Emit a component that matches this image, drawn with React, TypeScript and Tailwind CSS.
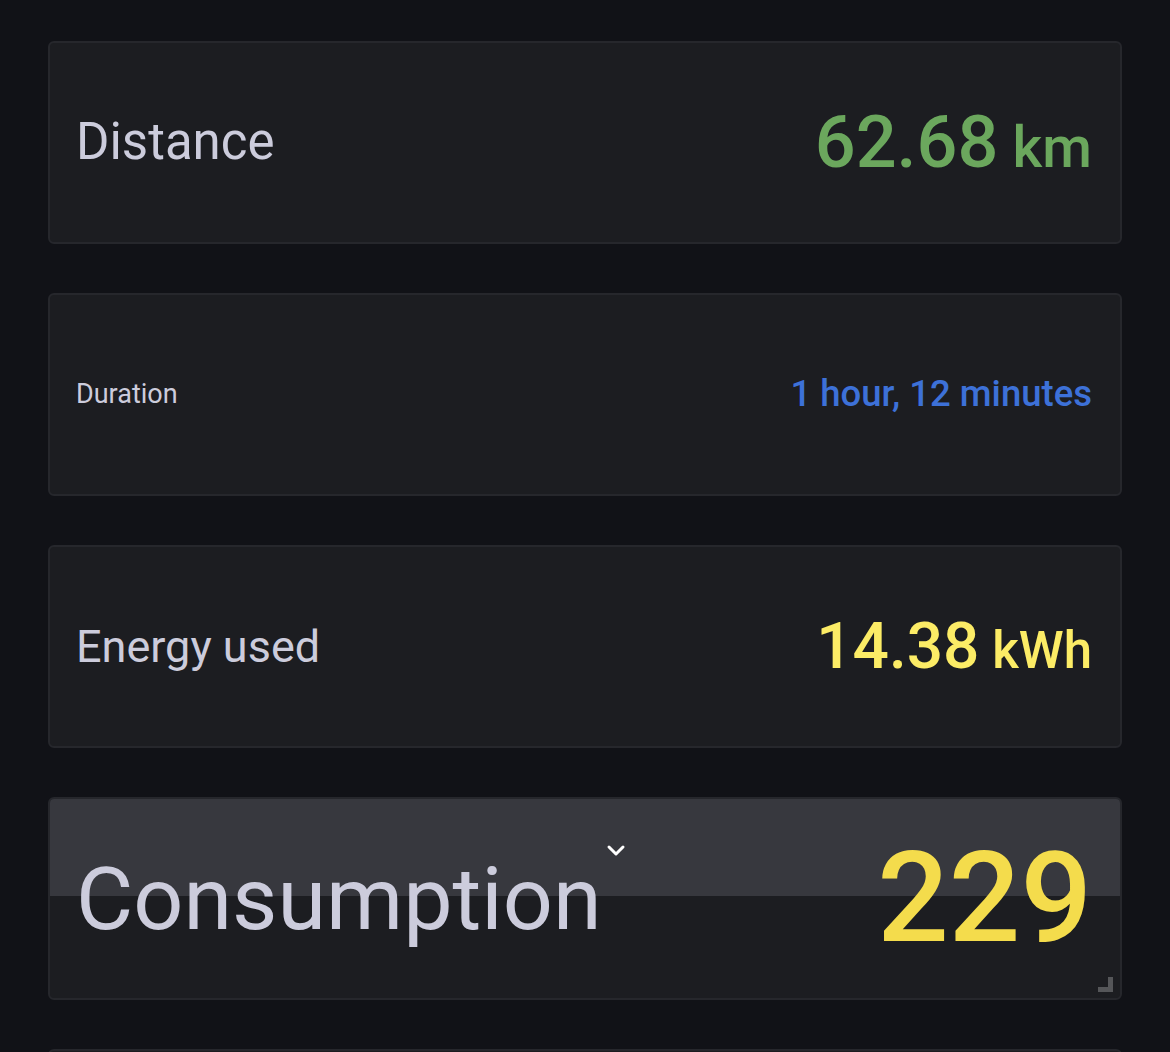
import React from 'react'

const font = { fontFamily: 'Roboto, "Open Sans", sans-serif' }

type StatProps = {
  label: string
  labelClass: string
  value: string
  unit?: string
  valueClass: string
  unitClass?: string
  color: string
  hover?: boolean
}

const Stat = ({ label, labelClass, value, unit, valueClass, unitClass, color, hover }: StatProps) => {
  return (
    <div className="relative h-[203px] rounded-md border-2 border-[#26272c] bg-[#1c1d21] overflow-hidden">
      {hover && (
        <div className="absolute left-0 right-0 top-0 h-[97px] bg-[#37383e]">
          <svg className="absolute left-[555px] top-[44px]" width="22" height="14" viewBox="0 0 22 14">
            <path d="M4 4 L11 11 L18 4" fill="none" stroke="#ffffff" strokeWidth="3" strokeLinecap="round" strokeLinejoin="round" />
          </svg>
        </div>
      )}
      <div className="relative flex h-full items-center justify-between pl-[26px] pr-[28px]">
        <span className={`text-[#ccccdc] ${labelClass}`}>{label}</span>
        <span className={`whitespace-nowrap ${valueClass} ${color}`}>
          {value}
          {unit && <span className={unitClass}>{unit}</span>}
        </span>
      </div>
      {hover && (
        <div className="absolute right-[7px] bottom-[6px] h-[15px] w-[15px]">
          <div className="absolute right-0 bottom-0 h-[15px] w-[5px] bg-[#555659]" />
          <div className="absolute right-0 bottom-0 h-[5px] w-[15px] bg-[#555659]" />
        </div>
      )}
    </div>
  )
}

export default function App() {
  return (
    <div className="min-h-screen h-[1052px] overflow-hidden bg-[#111217] px-[48px] pt-[41px]" style={font}>
      <div className="flex flex-col gap-[49px]">
        <Stat
          label="Distance"
          labelClass="text-[51px]"
          value="62.68"
          unit=" km"
          valueClass="text-[72px] font-medium"
          unitClass="text-[57px]"
          color="text-[#6ba75d]"
        />
        <Stat
          label="Duration"
          labelClass="text-[27px]"
          value="1 hour, 12 minutes"
          valueClass="text-[36.5px] font-medium"
          color="text-[#3d71d8]"
        />
        <Stat
          label="Energy used"
          labelClass="text-[45px]"
          value="14.38"
          unit=" kWh"
          valueClass="text-[64px] font-medium"
          unitClass="text-[51px]"
          color="text-[#fcec66]"
        />
        <Stat
          label="Consumption"
          labelClass="text-[88px]"
          value="229"
          valueClass="text-[126px] font-medium"
          color="text-[#f4dc4c]"
          hover
        />
        <div className="h-[203px] rounded-md border-2 border-[#26272c] bg-[#1c1d21]" />
      </div>
    </div>
  )
}
